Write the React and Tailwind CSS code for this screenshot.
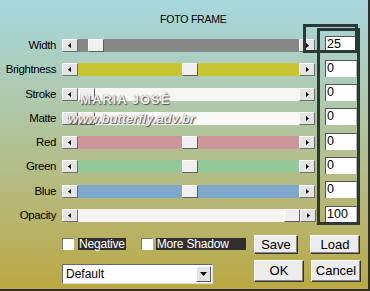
const ROWS = [
  { label: 'Width', track: 'bg-[#878787]', pos: 10, value: '25' },
  { label: 'Brightness', track: 'bg-[#c9c532]', pos: 104, value: '0' },
  { label: 'Stroke', track: 'bg-[#f6f6f4]', pos: 1, value: '0' },
  { label: 'Matte', track: 'bg-[#f8f8f6]', pos: 1, value: '0' },
  { label: 'Red', track: 'bg-[#cc9597]', pos: 104, value: '0' },
  { label: 'Green', track: 'bg-[#92c996]', pos: 104, value: '0' },
  { label: 'Blue', track: 'bg-[#7fa7cb]', pos: 104, value: '0' },
  { label: 'Opacity', track: 'bg-[#f4f4f2]', pos: 206, value: '100' },
];

function ArrowBtn({ dir }) {
  return (
    <div className="w-[16px] h-[13px] shrink-0 bg-[#e4e4e4] border border-t-white border-l-white border-b-[#6e6e6e] border-r-[#6e6e6e] flex items-center justify-center">
      <svg width="4" height="5" viewBox="0 0 4 5">
        {dir === 'left'
          ? <path d="M3 0 L3 5 L0 2.5 Z" fill="#000" />
          : <path d="M1 0 L1 5 L4 2.5 Z" fill="#000" />}
      </svg>
    </div>
  );
}

function Thumb() {
  return (
    <div className="w-[16px] h-[13px] shrink-0 bg-[#efefef] border border-t-white border-l-white border-b-[#5e5e5e] border-r-[#5e5e5e]" />
  );
}

function Button({ children, w }) {
  return (
    <div className={`${w} bg-[#ececec] border border-t-white border-l-white border-b-[#333] border-r-[#333] shadow-[inset_-1px_-1px_0_#888] flex items-center justify-center text-[13px] text-black`}>
      {children}
    </div>
  );
}

export default function App() {
  return (
    <div
      className="relative w-[370px] h-[291px] overflow-hidden border-r-2 border-b-2 border-[#2e2e2a] bg-gradient-to-b from-[#a6d7df] via-[#b1c49c] via-45% to-[#bba83f] text-black"
      style={{ fontFamily: '"Liberation Sans", Arial, sans-serif' }}
    >
      <div className="pt-[13px] pl-[160px] text-[10.5px] leading-[12px] tracking-[-0.2px]">FOTO FRAME</div>

      <div className="mt-[14px] flex flex-col gap-[11.3px]">
        {ROWS.map(r => (
          <div key={r.label} className="flex items-center h-[13px]">
            <div className="w-[56px] text-right text-[11.5px] tracking-[-0.4px] leading-[13px]">{r.label}</div>
            <div className="ml-[6px] w-[253px] flex">
              <ArrowBtn dir="left" />
              <div className="flex w-[222px] h-[13px]">
                <div className={`${r.track} h-full`} style={{ width: r.pos }} />
                <Thumb />
                <div className={`${r.track} h-full flex-1`} />
              </div>
              <ArrowBtn dir="right" />
            </div>
            <div className="ml-[10px] w-[33px] h-[17px] mt-[-3px] bg-white border-l border-t border-[#555] border-r-2 border-r-[#b8b8b8] pl-[1px] text-[12.5px] leading-[15px]">
              {r.value}
            </div>
          </div>
        ))}
      </div>

      <div className="mt-[13px] flex">
        <div className="w-[192px] ml-[62px] flex flex-col">
          <div className="mt-[3px] flex items-center h-[12px]">
            <div className="w-[12px] h-[12px] bg-white border border-t-[#777] border-l-[#777] border-b-white border-r-white" />
            <div className="ml-[4px] bg-[#2f2f2f] text-white text-[12px] leading-[12px] px-[1px] tracking-[-0.2px]">Negative</div>
            <div className="ml-[15px] w-[12px] h-[12px] bg-white border border-t-[#777] border-l-[#777] border-b-white border-r-white" />
            <div className="ml-[3px] bg-[#2f2f2f] text-white text-[12px] leading-[12px] pl-[1px] w-[90px] tracking-[-0.2px]">More Shadow</div>
          </div>
          <div className="mt-[14px] w-[151px] h-[20px] bg-white border border-t-[#666] border-l-[#666] border-b-[#ddd] border-r-[#ddd] flex items-center">
            <div className="flex-1 pl-[3px] text-[12px]">Default</div>
            <div className="w-[15px] h-[16px] mr-[1px] bg-[#e4e4e4] border border-t-white border-l-white border-b-[#555] border-r-[#555] flex items-center justify-center">
              <svg width="7" height="4" viewBox="0 0 7 4"><path d="M0 0 L7 0 L3.5 4 Z" fill="#000" /></svg>
            </div>
          </div>
        </div>
        <div className="flex flex-col gap-[6px]">
          <div className="flex gap-[12px]">
            <div className="h-[19px] flex"><Button w="w-[44px]">Save</Button></div>
            <div className="h-[19px] flex"><Button w="w-[50px]">Load</Button></div>
          </div>
          <div className="flex gap-[7px]">
            <div className="h-[22px] flex"><Button w="w-[50px]">OK</Button></div>
            <div className="h-[22px] flex"><Button w="w-[50px]">Cancel</Button></div>
          </div>
        </div>
      </div>

      {/* watermark */}
      <div className="absolute left-[80px] top-[90px] text-[13px] font-bold tracking-[1px] text-white/90 [text-shadow:0_0_1px_#555,1px_1px_1px_#555]">MARIA JOSÉ</div>
      <div className="absolute left-[68px] top-[109px] text-[13px] font-bold italic text-white/90 [text-shadow:0_0_1px_#555,1px_1px_1px_#555]">www.butterfly.adv.br</div>

      {/* dark frame outlines */}
      <div className="absolute left-[303px] top-[24px] w-[55px] h-[29px] border-[3px] border-[#2a3936]" />
      <div className="absolute left-[317px] top-[28px] w-[43px] h-[197px] border-[3px] border-[#2a3936]" />
    </div>
  );
}
